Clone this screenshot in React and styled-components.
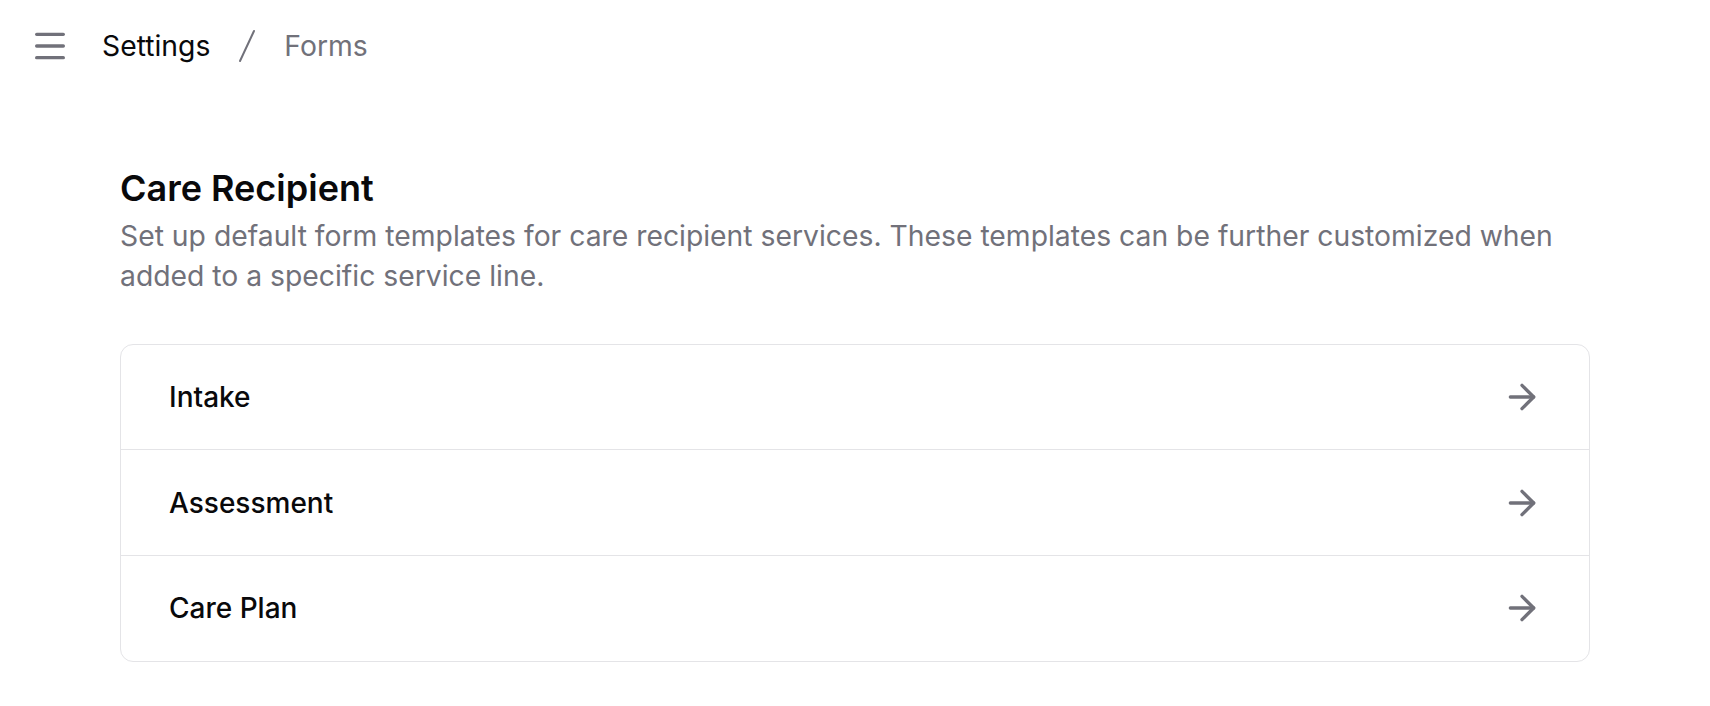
import React from "react";
import styled, { createGlobalStyle } from "styled-components";
import { ArrowRight, Menu } from "lucide-react";

const GlobalStyle = createGlobalStyle`
  html, body {
    margin: 0;
    padding: 0;
    background: #ffffff;
  }
  body {
    font-family: Inter, "Noto Sans", "Liberation Sans", sans-serif;
    color: #09090b;
    -webkit-font-smoothing: antialiased;
  }
  * {
    box-sizing: border-box;
  }
`;

const Page = styled.div`
  min-height: 706px;
  background: #ffffff;
`;

const TopBar = styled.header`
  height: 92px;
  display: flex;
  align-items: center;
  padding: 0 30px;
  gap: 32px;
`;

const MenuButton = styled.button`
  display: flex;
  align-items: center;
  justify-content: center;
  width: 40px;
  height: 40px;
  padding: 0;
  border: none;
  background: none;
  color: #71717a;
  cursor: pointer;
`;

const Breadcrumb = styled.nav`
  display: flex;
  align-items: center;
  gap: 27px;
  font-size: 28.3px;
  line-height: 40px;
`;

const Crumb = styled.span`
  color: ${({ $current }) => ($current ? "#71717a" : "#09090b")};
`;

const Separator = styled.svg`
  width: 20px;
  height: 34px;
  color: #71717a;
`;

const Content = styled.main`
  padding: 72px 120px 0;
`;

const Title = styled.h2`
  margin: 0 0 4px;
  font-size: 36px;
  line-height: 48px;
  font-weight: 600;
  color: #09090b;
`;

const Description = styled.p`
  margin: 0;
  font-size: 28.3px;
  line-height: 40px;
  color: #71717a;
`;

const List = styled.div`
  margin-top: 48px;
  border: 1.67px solid #e4e4e7;
  border-radius: 13px;
  overflow: hidden;
`;

const Row = styled.a`
  display: flex;
  align-items: center;
  justify-content: space-between;
  height: 104.2px;
  padding: 0 47px 0 48px;
  color: #09090b;
  text-decoration: none;
  cursor: pointer;

  & + & {
    border-top: 1.67px solid #e4e4e7;
    height: 105.8px;
  }

  &:hover {
    background: #fafafa;
  }
`;

const RowLabel = styled.span`
  font-size: 28px;
  font-weight: 500;
  line-height: 40px;
`;

const ArrowIcon = styled(ArrowRight)`
  color: #71717a;
  flex-shrink: 0;
`;

const forms = ["Intake", "Assessment", "Care Plan"];

export default function App() {
  return (
    <Page>
      <GlobalStyle />
      <TopBar>
        <MenuButton aria-label="Toggle sidebar">
          <Menu size={40} strokeWidth={2} />
        </MenuButton>
        <Breadcrumb>
          <Crumb>Settings</Crumb>
          <Separator viewBox="0 0 20 34" fill="none">
            <line x1="17" y1="2" x2="3" y2="32" stroke="currentColor" strokeWidth="2" strokeLinecap="round" />
          </Separator>
          <Crumb $current>Forms</Crumb>
        </Breadcrumb>
      </TopBar>
      <Content>
        <Title>Care Recipient</Title>
        <Description>
          Set up default form templates for care recipient services. These
          templates can be further customized when added to a specific service
          line.
        </Description>
        <List>
          {forms.map((name) => (
            <Row key={name}>
              <RowLabel>{name}</RowLabel>
              <ArrowIcon size={40} strokeWidth={2} />
            </Row>
          ))}
        </List>
      </Content>
    </Page>
  );
}
